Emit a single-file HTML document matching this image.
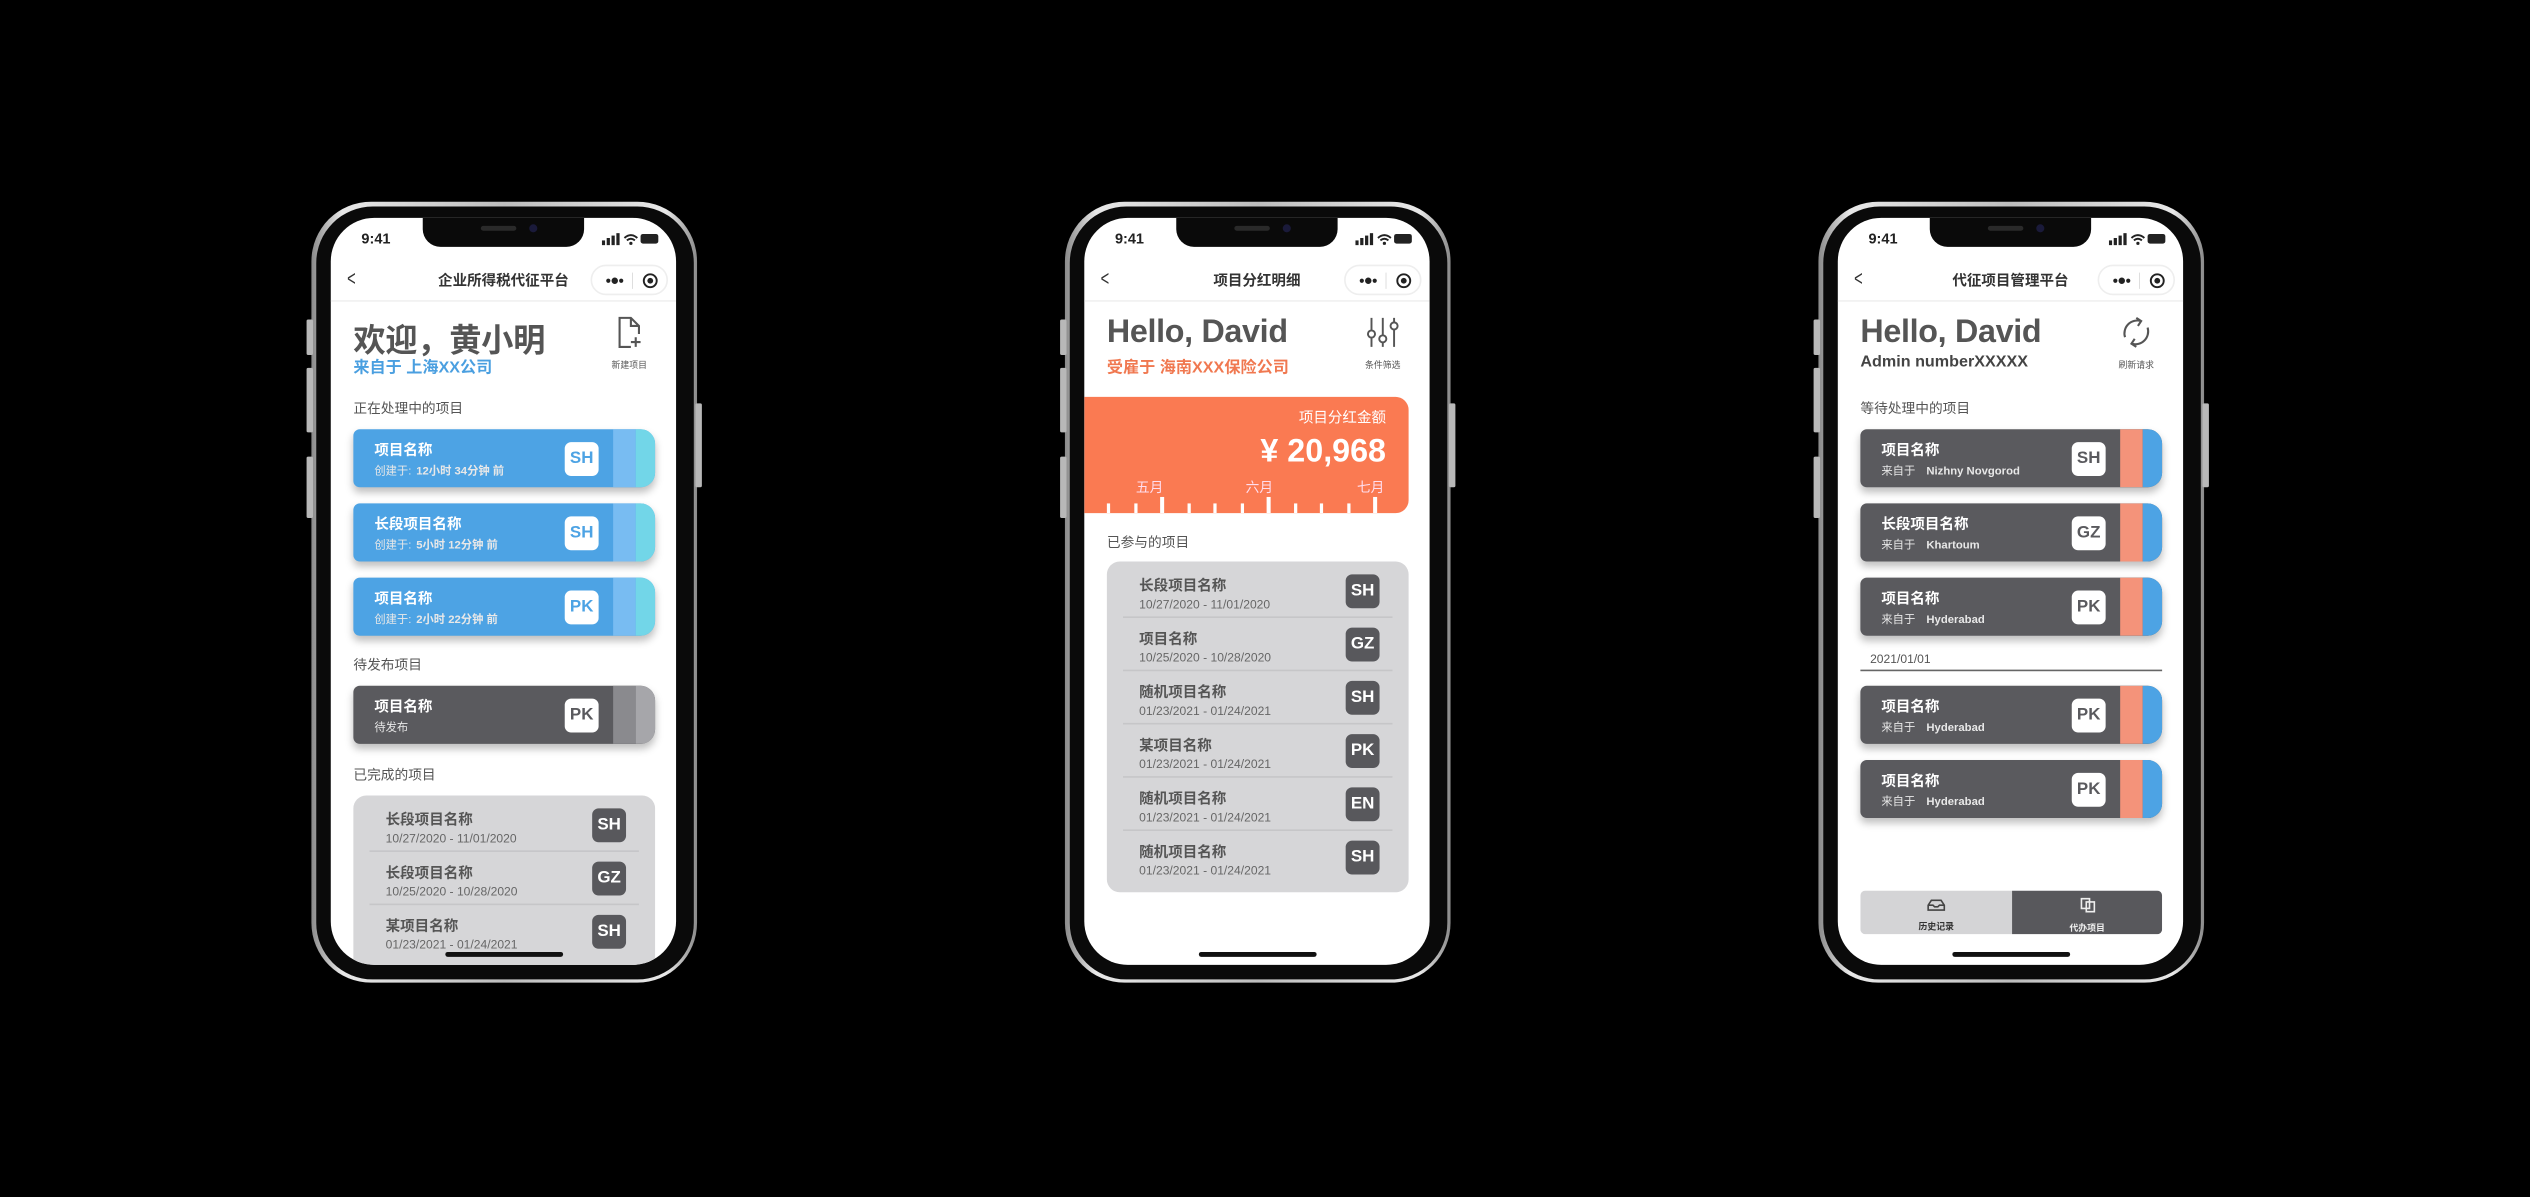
<!DOCTYPE html>
<html><head><meta charset="utf-8">
<style>
html,body{margin:0;padding:0;background:#000;width:2530px;height:1197px;overflow:hidden}
#w{position:absolute;left:0;top:0;width:1568px;height:742px;transform:scale(1.61352);transform-origin:0 0;font-family:"Liberation Sans","Noto Sans CJK SC",sans-serif;}
.phone{position:absolute;top:125px;width:239px;height:484px;border-radius:37px;background:linear-gradient(90deg,#8a8a8a,#e8e8e8 8%,#bdbdbd 50%,#e8e8e8 92%,#8a8a8a);}
.bez{position:absolute;left:2.5px;top:2.5px;right:2.5px;bottom:2.5px;border-radius:35px;background:#0a0a0a}
.btn{position:absolute;width:4px;background:#b8b8b8;border-radius:1px}
.scr{position:absolute;left:12px;top:10px;width:214px;height:463px;border-radius:27px;background:#fff;overflow:hidden}
.notch{position:absolute;left:57px;top:0;width:100px;height:18px;background:#0a0a0a;border-radius:0 0 11px 11px}
.spk{position:absolute;left:36px;top:5px;width:22px;height:3px;border-radius:2px;background:#2a2a2a}
.cam{position:absolute;left:66px;top:4px;width:5px;height:5px;border-radius:50%;background:#1a1a3a}
.time{position:absolute;left:19px;top:8px;font-size:9px;font-weight:bold;color:#222}
.stat{position:absolute;left:168px;top:9px}
.nav{position:absolute;left:0;top:28px;width:214px;height:22px}
.back{position:absolute;left:9px;top:2px;font-size:13px;color:#333;transform:scaleX(.7)}
.title{position:absolute;left:0;width:214px;top:4px;text-align:center;font-size:9px;color:#333;font-weight:bold}
.cap{position:absolute;left:161px;top:1px;width:48px;height:19px;border-radius:10px;border:1px solid #eee;box-sizing:border-box}
.div{position:absolute;left:0;top:51px;width:214px;height:1px;background:#f0f0f0}
.h1{position:absolute;left:14px;top:60px;font-size:20px;font-weight:bold;color:#555;white-space:nowrap;letter-spacing:-.2px}
.sub{position:absolute;left:14px;top:84px;font-size:10px;font-weight:bold;white-space:nowrap}
.ic{position:absolute;left:168px;top:61px;width:34px;text-align:center}
.ic span{display:block;font-size:5.5px;color:#555;margin-top:1px;white-space:nowrap}
.lbl{position:absolute;left:14px;font-size:8.5px;color:#555;white-space:nowrap}
.card{position:absolute;left:14px;width:187px;height:36px;border-radius:4px 9px 9px 4px;overflow:hidden;box-shadow:0 3px 5px rgba(0,0,0,.25)}
.card .s1{position:absolute;right:12px;top:0;width:14px;height:100%}
.card .s2{position:absolute;right:0;top:0;width:12px;height:100%}
.card .t{position:absolute;left:13px;top:6px;font-size:9px;font-weight:bold;color:#fff;white-space:nowrap}
.card .d{position:absolute;left:13px;top:21px;font-size:7px;color:#e8e8e8;white-space:nowrap}
.card .d b{margin-left:3px}
.bd{position:absolute;left:131px;top:8px;width:21px;height:21px;border-radius:4px;background:#fff;font-size:10.5px;font-weight:bold;text-align:center;line-height:21px}
.blue{background:#4da3e4}.blue .s1{background:#78bcf2}.blue .s2{background:#72d6e8}.blue .bd{color:#4da3e4}
.dark{background:#5a5a5e}.g .s1{background:#8a8a8e}.g .s2{background:#a6a6aa}.dark .bd{color:#5a5a5e}
.o .s1{background:#f4937a}.o .s2{background:#4da3e4}
.panel{position:absolute;left:14px;width:187px;background:#d6d6d8;border-radius:8px;overflow:hidden}
.row{position:absolute;left:0;width:187px;height:33px}
.row .t{position:absolute;left:20px;top:6px;font-size:9px;font-weight:bold;color:#555;white-space:nowrap}
.row .d{position:absolute;left:20px;top:20px;font-size:7.5px;color:#666;white-space:nowrap}
.row .bd{left:148px;top:6px;background:#58585c;color:#fff}
.row .ln{position:absolute;left:10px;right:10px;bottom:0;height:1px;background:#c6c6c8}
.home{position:absolute;left:71px;top:455px;width:73px;height:3px;border-radius:2px;background:#111}
</style></head><body><div id="w">

<!-- PHONE 1 -->
<div class="phone" style="left:193px">
<div class="btn" style="left:-3px;top:73px;height:22px"></div>
<div class="btn" style="left:-3px;top:103px;height:40px"></div>
<div class="btn" style="left:-3px;top:158px;height:38px"></div>
<div class="btn" style="right:-3px;top:125px;height:52px"></div>
<div class="bez"></div>
<div class="scr">
 <div class="notch"><div class="spk"></div><div class="cam"></div></div>
 <div class="time">9:41</div>
 <svg class="stat" width="36" height="8" viewBox="0 0 36 8"><rect x="0" y="5" width="2" height="3" fill="#222"/><rect x="3" y="3.5" width="2" height="4.5" fill="#222"/><rect x="6" y="2" width="2" height="6" fill="#222"/><rect x="9" y="0.5" width="2" height="7.5" fill="#222"/><path d="M14 3.5 Q18 0 22 3.5 M15.5 5 Q18 3 20.5 5" stroke="#222" stroke-width="1.2" fill="none"/><circle cx="18" cy="6.8" r="1" fill="#222"/><rect x="24" y="1" width="11" height="6" rx="1.5" fill="#222"/></svg>
 <div class="nav"><div class="back">&lt;</div><div class="title">企业所得税代征平台</div><div class="cap"><svg width="48" height="19" viewBox="0 0 48 19"><circle cx="10" cy="9" r="1.3" fill="#222"/><circle cx="14" cy="9" r="2" fill="#222"/><circle cx="18" cy="9" r="1.3" fill="#222"/><line x1="25" y1="4" x2="25" y2="14" stroke="#ddd" stroke-width=".6"/><circle cx="36" cy="9" r="4" stroke="#222" stroke-width="1.2" fill="none"/><circle cx="36" cy="9" r="1.8" fill="#222"/></svg></div></div>
 <div class="div"></div>
 <div class="h1">欢迎，黄小明</div>
 <div class="sub" style="color:#4a9fe0">来自于 上海XX公司</div>
 <div class="ic"><svg width="16" height="20" viewBox="0 0 16 20"><path d="M9 19H2V1h7l5 5v5M9 1v5h5" stroke="#555" stroke-width="1.3" fill="none"/><path d="M12 13v6M9 16h6" stroke="#555" stroke-width="1.3"/></svg><span>新建项目</span></div>
 <div class="lbl" style="top:112px">正在处理中的项目</div>
 <div class="card blue" style="top:131px"><div class="s1"></div><div class="s2"></div><div class="t">项目名称</div><div class="d">创建于:<b>12小时 34分钟 前</b></div><div class="bd">SH</div></div>
 <div class="card blue" style="top:177px"><div class="s1"></div><div class="s2"></div><div class="t">长段项目名称</div><div class="d">创建于:<b>5小时 12分钟 前</b></div><div class="bd">SH</div></div>
 <div class="card blue" style="top:223px"><div class="s1"></div><div class="s2"></div><div class="t">项目名称</div><div class="d">创建于:<b>2小时 22分钟 前</b></div><div class="bd">PK</div></div>
 <div class="lbl" style="top:271px">待发布项目</div>
 <div class="card dark g" style="top:290px"><div class="s1"></div><div class="s2"></div><div class="t">项目名称</div><div class="d">待发布</div><div class="bd">PK</div></div>
 <div class="lbl" style="top:339px">已完成的项目</div>
 <div class="panel" style="top:358px;height:120px">
  <div class="row" style="top:2px"><div class="t">长段项目名称</div><div class="d">10/27/2020 - 11/01/2020</div><div class="bd">SH</div><div class="ln"></div></div>
  <div class="row" style="top:35px"><div class="t">长段项目名称</div><div class="d">10/25/2020 - 10/28/2020</div><div class="bd">GZ</div><div class="ln"></div></div>
  <div class="row" style="top:68px"><div class="t">某项目名称</div><div class="d">01/23/2021 - 01/24/2021</div><div class="bd">SH</div></div>
 </div>
 <div class="home"></div>
</div></div>

<!-- PHONE 2 -->
<div class="phone" style="left:660px">
<div class="btn" style="left:-3px;top:73px;height:22px"></div>
<div class="btn" style="left:-3px;top:103px;height:40px"></div>
<div class="btn" style="left:-3px;top:158px;height:38px"></div>
<div class="btn" style="right:-3px;top:125px;height:52px"></div>
<div class="bez"></div>
<div class="scr">
 <div class="notch"><div class="spk"></div><div class="cam"></div></div>
 <div class="time">9:41</div>
 <svg class="stat" width="36" height="8" viewBox="0 0 36 8"><rect x="0" y="5" width="2" height="3" fill="#222"/><rect x="3" y="3.5" width="2" height="4.5" fill="#222"/><rect x="6" y="2" width="2" height="6" fill="#222"/><rect x="9" y="0.5" width="2" height="7.5" fill="#222"/><path d="M14 3.5 Q18 0 22 3.5 M15.5 5 Q18 3 20.5 5" stroke="#222" stroke-width="1.2" fill="none"/><circle cx="18" cy="6.8" r="1" fill="#222"/><rect x="24" y="1" width="11" height="6" rx="1.5" fill="#222"/></svg>
 <div class="nav"><div class="back">&lt;</div><div class="title">项目分红明细</div><div class="cap"><svg width="48" height="19" viewBox="0 0 48 19"><circle cx="10" cy="9" r="1.3" fill="#222"/><circle cx="14" cy="9" r="2" fill="#222"/><circle cx="18" cy="9" r="1.3" fill="#222"/><line x1="25" y1="4" x2="25" y2="14" stroke="#ddd" stroke-width=".6"/><circle cx="36" cy="9" r="4" stroke="#222" stroke-width="1.2" fill="none"/><circle cx="36" cy="9" r="1.8" fill="#222"/></svg></div></div>
 <div class="div"></div>
 <div class="h1">Hello, David</div>
 <div class="sub" style="color:#f07850">受雇于 海南XXX保险公司</div>
 <div class="ic"><svg width="22" height="20" viewBox="0 0 22 20"><path d="M4 1v18M11 1v18M18 1v18" stroke="#555" stroke-width="1.2"/><circle cx="4" cy="11" r="2.2" fill="#fff" stroke="#555" stroke-width="1.2"/><circle cx="11" cy="14" r="2.2" fill="#fff" stroke="#555" stroke-width="1.2"/><circle cx="18" cy="6" r="2.2" fill="#fff" stroke="#555" stroke-width="1.2"/></svg><span>条件筛选</span></div>
 <div style="position:absolute;left:0;top:111px;width:201px;height:72px;background:#fa7a52;border-radius:0 8px 8px 0;overflow:hidden">
  <div style="position:absolute;right:14px;top:6px;font-size:9px;color:#fff">项目分红金额</div>
  <div style="position:absolute;right:14px;top:23px;font-size:20px;font-weight:bold;color:#fff">¥ 20,968</div>
  <div style="position:absolute;left:32px;top:50px;font-size:8.5px;color:#fde">五月</div>
  <div style="position:absolute;left:100px;top:50px;font-size:8.5px;color:#fde">六月</div>
  <div style="position:absolute;left:169px;top:50px;font-size:8.5px;color:#fde">七月</div>
  <svg style="position:absolute;left:0;top:60px" width="201" height="12"><g fill="#fff">
   <rect x="14" y="6" width="2" height="6"/><rect x="31" y="6" width="2" height="6"/><rect x="47" y="2" width="2.5" height="10"/><rect x="64" y="6" width="2" height="6"/><rect x="80" y="6" width="2" height="6"/><rect x="97" y="6" width="2" height="6"/><rect x="113" y="2" width="2.5" height="10"/><rect x="130" y="6" width="2" height="6"/><rect x="146" y="6" width="2" height="6"/><rect x="163" y="6" width="2" height="6"/><rect x="179" y="2" width="2.5" height="10"/></g></svg>
 </div>
 <div class="lbl" style="top:195px">已参与的项目</div>
 <div class="panel" style="top:213px;height:205px">
  <div class="row" style="top:2px"><div class="t">长段项目名称</div><div class="d">10/27/2020 - 11/01/2020</div><div class="bd">SH</div><div class="ln"></div></div>
  <div class="row" style="top:35px"><div class="t">项目名称</div><div class="d">10/25/2020 - 10/28/2020</div><div class="bd">GZ</div><div class="ln"></div></div>
  <div class="row" style="top:68px"><div class="t">随机项目名称</div><div class="d">01/23/2021 - 01/24/2021</div><div class="bd">SH</div><div class="ln"></div></div>
  <div class="row" style="top:101px"><div class="t">某项目名称</div><div class="d">01/23/2021 - 01/24/2021</div><div class="bd">PK</div><div class="ln"></div></div>
  <div class="row" style="top:134px"><div class="t">随机项目名称</div><div class="d">01/23/2021 - 01/24/2021</div><div class="bd">EN</div><div class="ln"></div></div>
  <div class="row" style="top:167px"><div class="t">随机项目名称</div><div class="d">01/23/2021 - 01/24/2021</div><div class="bd">SH</div></div>
 </div>
 <div class="home"></div>
</div></div>

<!-- PHONE 3 -->
<div class="phone" style="left:1127px">
<div class="btn" style="left:-3px;top:73px;height:22px"></div>
<div class="btn" style="left:-3px;top:103px;height:40px"></div>
<div class="btn" style="left:-3px;top:158px;height:38px"></div>
<div class="btn" style="right:-3px;top:125px;height:52px"></div>
<div class="bez"></div>
<div class="scr">
 <div class="notch"><div class="spk"></div><div class="cam"></div></div>
 <div class="time">9:41</div>
 <svg class="stat" width="36" height="8" viewBox="0 0 36 8"><rect x="0" y="5" width="2" height="3" fill="#222"/><rect x="3" y="3.5" width="2" height="4.5" fill="#222"/><rect x="6" y="2" width="2" height="6" fill="#222"/><rect x="9" y="0.5" width="2" height="7.5" fill="#222"/><path d="M14 3.5 Q18 0 22 3.5 M15.5 5 Q18 3 20.5 5" stroke="#222" stroke-width="1.2" fill="none"/><circle cx="18" cy="6.8" r="1" fill="#222"/><rect x="24" y="1" width="11" height="6" rx="1.5" fill="#222"/></svg>
 <div class="nav"><div class="back">&lt;</div><div class="title">代征项目管理平台</div><div class="cap"><svg width="48" height="19" viewBox="0 0 48 19"><circle cx="10" cy="9" r="1.3" fill="#222"/><circle cx="14" cy="9" r="2" fill="#222"/><circle cx="18" cy="9" r="1.3" fill="#222"/><line x1="25" y1="4" x2="25" y2="14" stroke="#ddd" stroke-width=".6"/><circle cx="36" cy="9" r="4" stroke="#222" stroke-width="1.2" fill="none"/><circle cx="36" cy="9" r="1.8" fill="#222"/></svg></div></div>
 <div class="div"></div>
 <div class="h1">Hello, David</div>
 <div class="sub" style="color:#444">Admin numberXXXXX</div>
 <div class="ic"><svg width="22" height="20" viewBox="0 0 22 20"><path d="M4 13A8 8 0 0 1 14 3M18 7A8 8 0 0 1 8 17" stroke="#555" stroke-width="1.3" fill="none"/><path d="M11 1l3 2-2 3M11 19l-3-2 2-3" stroke="#555" stroke-width="1.3" fill="none"/></svg><span>刷新请求</span></div>
 <div class="lbl" style="top:112px">等待处理中的项目</div>
 <div class="card dark o" style="top:131px"><div class="s1"></div><div class="s2"></div><div class="t">项目名称</div><div class="d">来自于 <b>&nbsp;Nizhny Novgorod</b></div><div class="bd">SH</div></div>
 <div class="card dark o" style="top:177px"><div class="s1"></div><div class="s2"></div><div class="t">长段项目名称</div><div class="d">来自于 <b>&nbsp;Khartoum</b></div><div class="bd">GZ</div></div>
 <div class="card dark o" style="top:223px"><div class="s1"></div><div class="s2"></div><div class="t">项目名称</div><div class="d">来自于 <b>&nbsp;Hyderabad</b></div><div class="bd">PK</div></div>
 <div style="position:absolute;left:20px;top:269px;font-size:7.5px;color:#555">2021/01/01</div>
 <div style="position:absolute;left:14px;top:280px;width:187px;height:1px;background:#666"></div>
 <div class="card dark o" style="top:290px"><div class="s1"></div><div class="s2"></div><div class="t">项目名称</div><div class="d">来自于 <b>&nbsp;Hyderabad</b></div><div class="bd">PK</div></div>
 <div class="card dark o" style="top:336px"><div class="s1"></div><div class="s2"></div><div class="t">项目名称</div><div class="d">来自于 <b>&nbsp;Hyderabad</b></div><div class="bd">PK</div></div>
 <div style="position:absolute;left:14px;top:417px;width:187px;height:27px;border-radius:3px;overflow:hidden">
  <div style="position:absolute;left:0;top:0;width:94px;height:27px;background:#d4d4d6;text-align:center">
   <svg style="margin-top:5px" width="12" height="8" viewBox="0 0 12 8"><path d="M1 7V4L3 1h6l2 3v3zM1 4h3l1 1h2l1-1h3" stroke="#444" stroke-width="1" fill="none"/></svg>
   <div style="font-size:5.5px;color:#333;font-weight:bold">历史记录</div></div>
  <div style="position:absolute;left:94px;top:0;width:93px;height:27px;background:#58585c;text-align:center">
   <svg style="margin-top:4px" width="12" height="10" viewBox="0 0 12 10"><path d="M2 1h5v6H2zM5 3h5v6H5z" stroke="#eee" stroke-width="1" fill="none"/></svg>
   <div style="font-size:5.5px;color:#eee;font-weight:bold">代办项目</div></div>
 </div>
 <div class="home"></div>
</div></div>

</div></body></html>
